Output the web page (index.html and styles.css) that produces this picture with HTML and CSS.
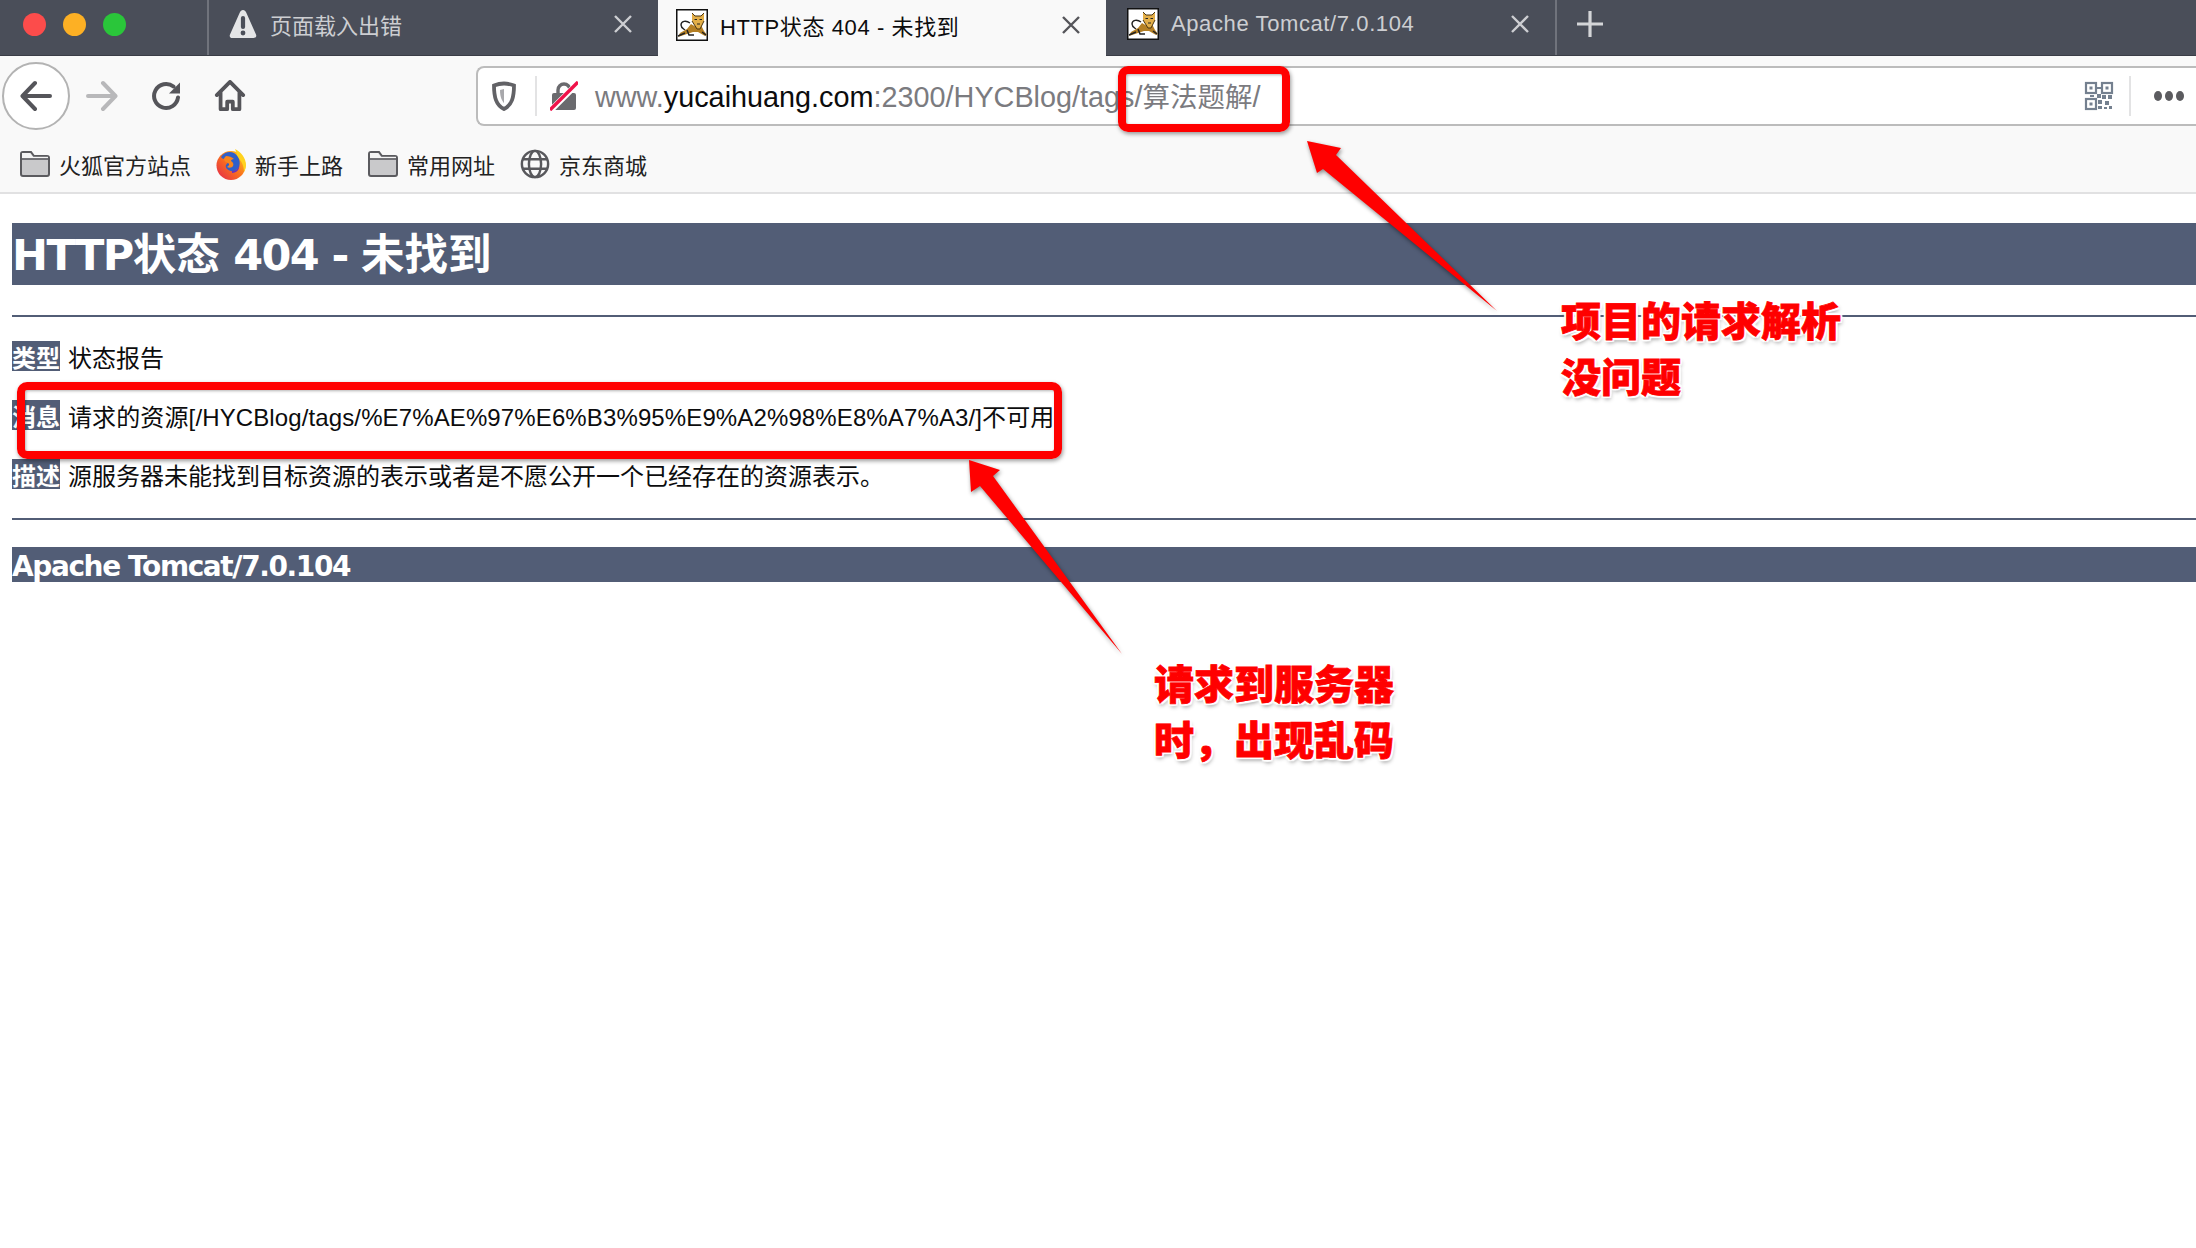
FILE: index.html
```html
<!DOCTYPE html>
<html lang="zh">
<head>
	<meta charset="utf-8">
	<title>HTTP状态 404 - 未找到</title>
	<link rel="stylesheet" href="styles.css">
</head>
<body>
	<svg class="defs" width="0" height="0">
		<defs>
			<linearGradient id="foxfire" x1="1" y1="0" x2="0" y2="1">
				<stop offset="0" stop-color="#ffd21e"/>
				<stop offset=".5" stop-color="#f9701d"/>
				<stop offset="1" stop-color="#e3234f"/>
			</linearGradient>
		</defs>
		<symbol id="tomcat" viewBox="0 0 32 32">
			<rect x=".75" y=".75" width="30.500" height="30.500" fill="#fff" stroke="#111" stroke-width="1.500"/>
			<path d="M14 14C10 11 5 12 5 16c0 3 3 4 4 5" fill="none" stroke="#222" stroke-width="1.400"/>
			<path d="M15 15l5 3 5-2 3 6 3 4-2 1-7-4-5 0-6 2-9 3 2-4 7-4z" fill="#b47f24"/>
			<path d="M16 4l3 3h6l3-3 0 8-4 8h-3l-5-8z" fill="#e2ae48"/>
			<path d="M16 4l3 3h6l3-3M16 12l5 8h3l4-8" fill="none" stroke="#4a3510" stroke-width="1"/>
			<path d="M18.500 10.500h2.500M23.500 10.500h2.500M21 15h3" stroke="#222" stroke-width="1.100"/>
			<path d="M11 21l2 5 5 0M26 23l4 3M2 27l7-3" fill="none" stroke="#222" stroke-width="1.500"/>
		</symbol>
		<symbol id="close" viewBox="0 0 20 20">
			<path d="M2 2l16 16M18 2L2 18" fill="none" stroke="currentColor" stroke-width="2.400"/>
		</symbol>
		<symbol id="folder" viewBox="0 0 32 28">
			<path d="M2 4a2 2 0 0 1 2-2h8l3 4h13a2 2 0 0 1 2 2v16a2 2 0 0 1-2 2H4a2 2 0 0 1-2-2z" fill="#c9c9cb" stroke="#5b5b5f" stroke-width="2"/>
			<path d="M3 3h8l3 4H3z" fill="#f4f4f4"/>
			<path d="M3 7.600h26" stroke="#f4f4f4" stroke-width="1.600"/>
			<path d="M2 9h28" stroke="#5b5b5f" stroke-width="1.600"/>
		</symbol>
	</svg>

	<div class="tabbar">
		<div class="lights">
			<span class="light red"></span>
			<span class="light yellow"></span>
			<span class="light green"></span>
		</div>
		<div class="tab">
			<svg class="warn" viewBox="0 0 28 30">
				<path d="M14 1c1.500 0 2.500 1 3.200 2.400l9.800 22c.9 2-.3 3.600-2.400 3.600H3.400c-2.100 0-3.300-1.600-2.400-3.600l9.800-22C11.500 2 12.500 1 14 1z" fill="#e4e5e7"/>
				<path d="M14 9v9" stroke="#4a4e59" stroke-width="4.200" stroke-linecap="round"/>
				<circle cx="14" cy="24" r="2.400" fill="#4a4e59"/>
			</svg>
			<span class="tab-title">页面载入出错</span>
			<svg class="tab-close"><use href="#close"/></svg>
		</div>
		<div class="tab active">
			<svg class="favicon"><use href="#tomcat"/></svg>
			<span class="tab-title">HTTP状态 404 - 未找到</span>
			<svg class="tab-close"><use href="#close"/></svg>
		</div>
		<div class="tab last">
			<svg class="favicon"><use href="#tomcat"/></svg>
			<span class="tab-title">Apache Tomcat/7.0.104</span>
			<svg class="tab-close"><use href="#close"/></svg>
		</div>
		<svg class="newtab" viewBox="0 0 28 28"><path d="M14 1v26M1 14h26" stroke="#d4d5d8" stroke-width="3.200"/></svg>
	</div>

	<div class="toolbar">
		<div class="navrow">
			<div class="backbtn">
				<svg viewBox="0 0 32 30" class="nav-icon"><path d="M30 15H3M15 2L2.500 15 15 28" fill="none" stroke="#55555a" stroke-width="4" stroke-linecap="round" stroke-linejoin="round"/></svg>
			</div>
			<div class="navbtn fwd">
				<svg viewBox="0 0 32 30" class="nav-icon"><path d="M2 15h27M17 2l12.500 13L17 28" fill="none" stroke="#b8b8ba" stroke-width="4" stroke-linecap="round" stroke-linejoin="round"/></svg>
			</div>
			<div class="navbtn reload">
				<svg viewBox="0 0 32 32" class="nav-icon"><path d="M27 17.500A12 12 0 1 1 22.500 6.500" fill="none" stroke="#55555a" stroke-width="4" stroke-linecap="round"/><path d="M29 2.500v11H18z" fill="#55555a"/></svg>
			</div>
			<div class="navbtn home">
				<svg viewBox="0 0 32 34" class="nav-icon"><path d="M2 16L16 2l14 14M6 13v18h7v-8h6v8h7V13" fill="none" stroke="#55555a" stroke-width="4" stroke-linecap="round" stroke-linejoin="round"/></svg>
			</div>
			<div class="urlbar">
				<svg class="shield" viewBox="0 0 24 30"><path d="M12 2.500c3 0 7 .8 10 2C22 16 20 24 12 28 4 24 2 16 2 4.500 5 3.300 9 2.500 12 2.500z" fill="none" stroke="#626266" stroke-width="3.800"/><path d="M12 8v14c-2-2-4-6-4-13z" fill="#a8a8ab"/></svg>
				<span class="url-sep"></span>
				<svg class="lock" viewBox="0 0 28 30">
					<path d="M8 13V9a6 6 0 0 1 12 0v4" fill="none" stroke="#6a6a6e" stroke-width="3.400"/>
					<rect x="2" y="12" width="24" height="17" rx="2" fill="#6a6a6e"/>
					<path d="M0 30L28 2" stroke="#fff" stroke-width="6"/>
					<path d="M0 29L28 1" stroke="#f0124a" stroke-width="3.400"/>
				</svg>
				<span class="url-text">www.<b>yucaihuang.com</b>:2300/HYCBlog/tags/<span class="url-cjk">算法题解</span>/</span>
				<svg class="qr" viewBox="0 0 30 30">
					<g fill="none" stroke="#74808f" stroke-width="2.200">
						<rect x="2" y="2" width="10" height="10"/><rect x="18" y="2" width="10" height="10"/><rect x="2" y="18" width="10" height="10"/>
					</g>
					<g fill="#74808f">
						<rect x="5.500" y="5.500" width="3" height="3"/><rect x="21.500" y="5.500" width="3" height="3"/><rect x="5.500" y="21.500" width="3" height="3"/>
						<rect x="13" y="6" width="4" height="2"/><rect x="13" y="13" width="4" height="4"/><rect x="6" y="14" width="4" height="2"/>
						<rect x="18" y="14" width="4" height="4"/><rect x="24" y="14" width="4" height="4"/><rect x="14" y="19" width="4" height="4"/>
						<rect x="21" y="20" width="4" height="4"/><rect x="14" y="25" width="4" height="3"/><rect x="25" y="25" width="3" height="3"/><rect x="20" y="26" width="3" height="2"/>
					</g>
				</svg>
				<span class="url-sep right"></span>
				<span class="dots"><i></i><i></i><i></i></span>
			</div>
		</div>
		<div class="bookmarks">
			<div class="bm">
				<svg class="bm-icon"><use href="#folder"/></svg>
				<span>火狐官方站点</span>
			</div>
			<div class="bm">
				<svg class="bm-icon fox" viewBox="0 0 32 32">
					<circle cx="16" cy="17.500" r="14.500" fill="url(#foxfire)"/>
					<path d="M20 1c6 3 11 9 11 16 0 3-1 5-2 7 0-7-3-12-7-15 0-3-1-6-2-8z" fill="#ffd21e"/>
					<path d="M6 9c3-5 9-6 13-4 5 3 7 9 5 14-2 3-5 5-8 4-4-1-6-4-5-6 1-2 3-3 4-3-1-1-3-1-4-3-2 0-4 0-5-2z" fill="#2f5fc9"/>
					<path d="M17 23c4 0 7-3 7-6 1 4-2 8-7 8z" fill="#6a34b8"/>
					<path d="M11 8c3 0 6 1 8 3-2 0-3 1-3 2 2 1 3 3 2 5-1 2-4 2-6 1 2-1 3-3 1-4-2-1-4-2-4-4 0-1 1-2 2-3z" fill="#f7841e"/>
				</svg>
				<span>新手上路</span>
			</div>
			<div class="bm">
				<svg class="bm-icon"><use href="#folder"/></svg>
				<span>常用网址</span>
			</div>
			<div class="bm">
				<svg class="bm-icon" viewBox="0 0 32 32">
					<g fill="none" stroke="#58585c" stroke-width="2.600">
						<circle cx="16" cy="16" r="14"/><ellipse cx="16" cy="16" rx="6.500" ry="14"/><path d="M3 11h26M3 21h26"/>
					</g>
				</svg>
				<span>京东商城</span>
			</div>
		</div>
	</div>

	<main class="page">
		<h1 class="band big">HTTP<span class="cjk">状态</span> 404 - <span class="cjk">未找到</span></h1>
		<hr class="rule">
		<p class="line first"><span class="label">类型</span>状态报告</p>
		<p class="line msg"><span class="label">消息</span>请求的资源[/HYCBlog/tags/%E7%AE%97%E6%B3%95%E9%A2%98%E8%A7%A3/]不可用</p>
		<p class="line"><span class="label">描述</span>源服务器未能找到目标资源的表示或者是不愿公开一个已经存在的资源表示。</p>
		<hr class="rule">
		<h3 class="band small">Apache Tomcat/7.0.104</h3>
	</main>

	<!-- screenshot annotations -->
	<div class="box box-url"></div>
	<div class="box box-msg"></div>
	<svg class="arrows" viewBox="0 0 2196 1248">
		<path d="M1307 141L1341 148 1336 155 1497 311 1323 169 1317 173z"/>
		<path d="M969 460L1000 470 993 476 1122 654 980 486 971 492z"/>
	</svg>
	<div class="note note-a">项目的请求解析<br>没问题</div>
	<div class="note note-b">请求到服务器<br>时，出现乱码</div>
</body>
</html>
```
FILE: styles.css
```css
* {
	box-sizing: border-box;
}
html, body {
	margin: 0;
	height: 100%;
	background: #fff;
	overflow: hidden;
}
body {
	font-family: "Liberation Sans", "Noto Sans CJK SC", sans-serif;
	position: relative;
}
.defs {
	position: absolute;
}

/* tabs */
.tabbar {
	display: flex;
	align-items: stretch;
	height: 56px;
	background: #4a4e59;
	border-bottom: 1px solid #3a3d46;
}
.lights {
	display: flex;
	align-items: center;
	gap: 17px;
	width: 207px;
	padding: 0 0 6px 23px;
}
.light {
	width: 23px;
	height: 23px;
	border-radius: 50%;
}
.red { background: #fc4c4b; }
.yellow { background: #fdb024; }
.green { background: #2ac63a; }
.tab {
	display: flex;
	align-items: center;
	width: 451px;
	padding: 0 25px 8px 20px;
	color: #cdced2;
	font-size: 22px;
	letter-spacing: .6px;
	border-left: 2px solid #70737c;
}
.tab:nth-of-type(2) {
	letter-spacing: 0;
}
.tab.active {
	width: 448px;
	padding-left: 18px;
	height: 57px;
	background: #f9f9f9;
	color: #0c0c0d;
	border-left: 0;
}
.tab.last {
	width: 451px;
	padding-left: 21px;
	border-left: 0;
	border-right: 2px solid #70737c;
}
.tab-title {
	flex: 1;
	white-space: nowrap;
}
.warn {
	width: 28px;
	height: 30px;
	margin-right: 13px;
}
.favicon {
	width: 32px;
	height: 32px;
	margin-right: 12px;
}
.tab-close {
	width: 20px;
	height: 20px;
	color: #cdced2;
}
.active .tab-close {
	color: #55555a;
}
.newtab {
	width: 28px;
	height: 28px;
	margin: 10px 0 0 19px;
}

/* toolbar */
.toolbar {
	height: 138px;
	background: #f9f9f9;
	border-bottom: 2px solid #e1e1e2;
}
.navrow {
	display: flex;
	align-items: center;
	height: 80px;
}
.backbtn {
	display: flex;
	align-items: center;
	justify-content: center;
	width: 68px;
	height: 68px;
	margin-left: 2px;
	background: #fff;
	border: 2px solid #b3b3b3;
	border-radius: 50%;
}
.navbtn {
	display: flex;
	align-items: center;
	justify-content: center;
	width: 64px;
}
.nav-icon {
	width: 32px;
	height: 32px;
}
.reload { width: 66px; }
.home { width: 60px; }
.urlbar {
	display: flex;
	align-items: center;
	flex: 1;
	height: 60px;
	margin-left: 216px;
	padding-left: 14px;
	background: #fff;
	border: 2px solid #bcbcbc;
	border-right: 0;
	border-radius: 8px 0 0 8px;
}
.shield {
	width: 24px;
	height: 30px;
}
.url-sep {
	width: 2px;
	height: 40px;
	margin-left: 19px;
	background: #e3e3e4;
}
.lock {
	width: 28px;
	height: 30px;
	margin-left: 13px;
}
.url-text {
	margin-left: 17px;
	padding-bottom: 2px;
	font-size: 28.800px;
	color: #7b7b7f;
	white-space: nowrap;
}
.url-text b {
	font-weight: 400;
	color: #0c0c0d;
}
.url-cjk {
	font-size: 27.500px;
}
.qr {
	width: 30px;
	height: 30px;
	margin-left: auto;
}
.url-sep.right {
	margin-left: 15px;
}
.dots {
	display: flex;
	gap: 3px;
	width: 65px;
	padding-left: 23px;
}
.dots i {
	width: 8px;
	height: 10px;
	background: #5b5b5f;
	border-radius: 50%;
}
.bookmarks {
	display: flex;
	align-items: center;
	height: 56px;
	padding-left: 19px;
	font-size: 22px;
	color: #222;
}
.bm {
	display: flex;
	align-items: center;
	margin-right: 24px;
}
.bm-icon {
	width: 32px;
	height: 30px;
	margin-right: 8px;
}
.bm-icon.fox {
	height: 32px;
}

/* 404 page */
.page {
	padding-left: 12px;
}
.band {
	margin: 0;
	background: #525d76;
	color: #fff;
	font-weight: 700;
	font-family: "DejaVu Sans", "Noto Sans CJK SC", sans-serif;
	white-space: nowrap;
}
.big {
	height: 62px;
	margin-top: 29px;
	font-size: 43px;
	line-height: 64px;
	letter-spacing: -1.600px;
}
.big .cjk {
	font-size: 43.500px;
	letter-spacing: 0;
}
.small {
	height: 35px;
	margin-top: 27px;
	font-size: 28px;
	line-height: 39px;
	letter-spacing: -1.400px;
}
.rule {
	height: 2px;
	margin: 30px 0 0;
	background: #525d76;
	border: 0;
}
.rule + .line {
	margin-top: 24px;
}
.line {
	height: 30px;
	margin: 29px 0 0;
	font-size: 24px;
	line-height: 36px;
	color: #0c0c0d;
	white-space: nowrap;
}
.line.msg {
	letter-spacing: .12px;
}
.line + .rule {
	margin-top: 29px;
}
.label {
	display: inline-block;
	height: 30px;
	margin-right: 8px;
	background: #525d76;
	color: #fff;
	font-weight: 700;
	letter-spacing: 0;
}

/* annotations */
.box {
	position: absolute;
	border: 8px solid #f00;
	border-radius: 10px;
	box-shadow: 1px 2px 4px rgba(0, 0, 0, .4), inset 1px 1px 3px rgba(0, 0, 0, .3);
}
.box-url {
	left: 1118px;
	top: 66px;
	width: 172px;
	height: 66px;
}
.box-msg {
	left: 17px;
	top: 382px;
	width: 1045px;
	height: 77px;
}
.arrows {
	position: absolute;
	left: 0;
	top: 0;
	width: 2196px;
	height: 1248px;
	fill: #f00;
	filter: drop-shadow(1px 2px 2px rgba(0, 0, 0, .45));
}
.note {
	position: absolute;
	font-size: 40px;
	line-height: 56px;
	font-weight: 900;
	color: #f00;
	white-space: nowrap;
	font-family: "Noto Sans CJK SC", sans-serif;
	-webkit-text-stroke: .8px #f00;
	text-shadow: 2px 0 1px #fff, -2px 0 1px #fff, 0 2px 1px #fff, 0 -2px 1px #fff, 2px 2px 1px #fff, -2px 2px 1px #fff, 2px -2px 1px #fff, -2px -2px 1px #fff, 1px 3px 4px rgba(0, 0, 0, .45);
}
.note-a {
	left: 1561px;
	top: 291px;
}
.note-b {
	left: 1154px;
	top: 654px;
}
```
